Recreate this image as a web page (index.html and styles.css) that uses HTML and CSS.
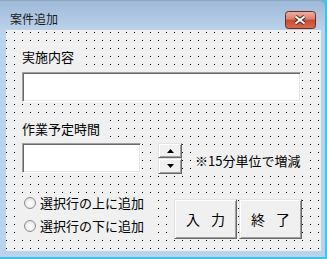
FILE: index.html
```html
<!DOCTYPE html>
<html lang="ja">
  <head>
    <meta charset="UTF-8" />
    <title>案件追加</title>
    <link rel="stylesheet" href="styles.css">
  </head>
  <body>
    <div class="window">
      <div class="titlebar">
        <span class="title">案件追加</span>
        <div class="close-btn">
          <svg width="31" height="18" viewBox="0 0 31 18">
            <defs>
              <linearGradient id="closeGrad" x1="0" y1="0" x2="0" y2="1">
                <stop offset="0" stop-color="#eab1a3" />
                <stop offset="0.45" stop-color="#d98270" />
                <stop offset="0.5" stop-color="#c84a31" />
                <stop offset="1" stop-color="#d66c4f" />
              </linearGradient>
            </defs>
            <rect x="0.5" y="0.5" width="30" height="17" rx="3" fill="url(#closeGrad)" stroke="#6e2a1f" />
            <path d="M10.5 5.5 L19.5 12.5 M19.5 5.5 L10.5 12.5" stroke="#4d2219" stroke-width="4" />
            <path d="M10.5 5.5 L19.5 12.5 M19.5 5.5 L10.5 12.5" stroke="#ffffff" stroke-width="2" />
          </svg>
        </div>
      </div>

      <div class="client">
        <div class="label label-first">実施内容</div>
        <div class="textbox textbox-wide"></div>

        <div class="label label-second">作業予定時間</div>
        <div class="time-row">
          <div class="textbox textbox-short"></div>
          <div class="spin">
            <div class="spin-btn spin-up">
              <svg width="7" height="4" viewBox="0 0 7 4"><path d="M3.5 0 L7 4 L0 4 Z" fill="#000" /></svg>
            </div>
            <div class="spin-btn spin-down">
              <svg width="7" height="4" viewBox="0 0 7 4"><path d="M0 0 L7 0 L3.5 4 Z" fill="#000" /></svg>
            </div>
          </div>
          <span class="note">※15分単位で増減</span>
        </div>

        <div class="bottom-row">
          <div class="radio-group">
            <div class="radio-row"><span class="radio"></span>選択行の上に追加</div>
            <div class="radio-row"><span class="radio"></span>選択行の下に追加</div>
          </div>
          <div class="button-row">
            <div class="button">入 力</div>
            <div class="button">終 了</div>
          </div>
        </div>
      </div>
    </div>
  </body>
</html>
```

FILE: styles.css
```css
/* Window shell */
body {
  margin: 0;
  background: #3dc5e6;
  font-family: "Noto Sans CJK JP", "Noto Sans", sans-serif;
  color: #000;
}

.window {
  width: 325px;
  height: 257px;
  background: linear-gradient(to bottom, #9cb7d7 0, #bcd2ea 30px, #bad2eb 100%);
  border-top-right-radius: 6px;
  box-shadow: inset 0 1px 0 #8ea6c2;
}

.titlebar {
  display: flex;
  justify-content: space-between;
  height: 30px;
}

.title {
  margin: 11px 0 0 10px;
  font-size: 12px;
  line-height: 16px;
  color: #1b1b1b;
}

.close-btn {
  margin: 10px 9px 0 0;
  height: 18px;
}

/* Form body with the design grid */
.client {
  display: flex;
  flex-direction: column;
  align-items: flex-start;
  box-sizing: border-box;
  width: 315px;
  height: 221px;
  margin-left: 6px;
  padding-left: 16px;
  background: conic-gradient(at 1px 1px, transparent 0 270deg, #000 0) 0 2px / 8px 8px, #f0f0f0;
}

.label {
  height: 22px;
  line-height: 22px;
  font-size: 13px;
  margin-left: -2px;
  padding-left: 2px;
  background: #f0f0f0;
}

.label-first {
  width: 58px;
  margin-top: 16px;
}

.label-second {
  width: 82px;
  margin-top: 16px;
}

.textbox {
  box-sizing: border-box;
  height: 30px;
  background: #fff;
  border: 1px solid;
  border-color: #a0a0a0 #fff #fff #a0a0a0;
  box-shadow: inset 1px 1px 0 #696969, inset -1px -1px 0 #e3e3e3;
}

.textbox-wide {
  width: 279px;
  margin-top: 4px;
}

.textbox-short {
  width: 119px;
}

.time-row {
  display: flex;
  align-items: flex-start;
  margin-top: 3px;
}

.spin {
  display: flex;
  flex-direction: column;
  margin-left: 17px;
}

.spin-btn,
.button {
  box-sizing: border-box;
  display: flex;
  align-items: center;
  justify-content: center;
  background: #f0f0f0;
  border: 1px solid;
  border-color: #e3e3e3 #696969 #696969 #e3e3e3;
  box-shadow: inset 1px 1px 0 #fff, inset -1px -1px 0 #a0a0a0;
}

.spin-btn {
  width: 24px;
  height: 15px;
}

.spin-down {
  height: 16px;
}

.note {
  margin: 9px 0 0 10px;
  padding: 0 3px;
  font-size: 13px;
  line-height: 18px;
  background: #f0f0f0;
}

.bottom-row {
  display: flex;
  align-items: flex-start;
  margin-top: 17px;
}

.radio-group {
  display: flex;
  flex-direction: column;
  width: 152px;
}

.radio-row {
  display: flex;
  align-items: center;
  width: 134px;
  height: 19px;
  margin-top: 2px;
  font-size: 13px;
  background: #f0f0f0;
}

.radio-row + .radio-row {
  margin-top: 4px;
}

.radio {
  box-sizing: border-box;
  width: 12px;
  height: 12px;
  margin: 0 4px 0 2px;
  border-radius: 50%;
  border: 1px solid #8d8d8d;
  background: radial-gradient(circle at 50% 55%, #ffffff 0, #f2f2f2 45%, #d2d2d2 100%);
}

.button-row {
  display: flex;
  gap: 2px;
  margin-top: 8px;
}

.button {
  width: 63px;
  height: 40px;
  font-size: 14px;
  word-spacing: 8px;
}
```
